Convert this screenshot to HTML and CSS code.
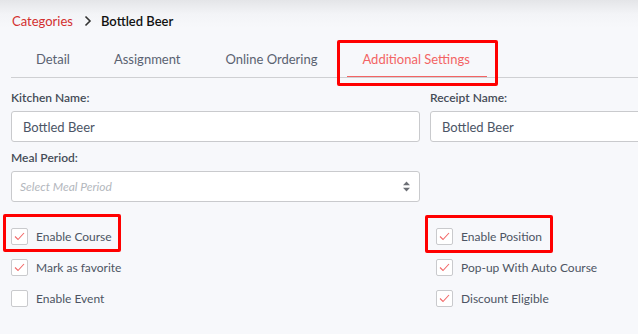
FILE: index.html
```html
<!DOCTYPE html>
<html>
<head>
<meta charset="utf-8">
<link rel="stylesheet" href="styles.css">
</head>
<body>
<div class="page">
  <div class="crumbs">
    <span class="crumb-link">Categories</span>
    <svg class="chev" width="8" height="12" viewBox="0 0 8 12"><polyline points="1.5,1.5 6,6 1.5,10.5" fill="none" stroke="#333" stroke-width="1.6"/></svg>
    <span class="crumb-current">Bottled Beer</span>
  </div>

  <div class="tabs">
    <div class="tab">Detail</div>
    <div class="tab">Assignment</div>
    <div class="tab">Online Ordering</div>
    <div class="tab active">Additional Settings<span class="mark mark-tab"></span></div>
  </div>

  <div class="fields">
    <div class="field">
      <label class="lbl">Kitchen Name:</label>
      <div class="input">Bottled Beer</div>
    </div>
    <div class="field">
      <label class="lbl">Receipt Name:</label>
      <div class="input">Bottled Beer</div>
    </div>
    <div class="field">
      <label class="lbl">Meal Period:</label>
      <div class="input select">
        <span class="placeholder">Select Meal Period</span>
        <svg class="sort" width="7" height="11" viewBox="0 0 7 11"><polygon points="3.5,0.5 7,4.2 0,4.2" fill="#6c6f75"/><polygon points="0,6.8 7,6.8 3.5,10.5" fill="#6c6f75"/></svg>
      </div>
    </div>
  </div>

  <div class="checks">
    <div class="col">
      <div class="chk marked"><span class="box on"></span><span>Enable Course</span><span class="mark mark-left"></span></div>
      <div class="chk"><span class="box on"></span><span>Mark as favorite</span></div>
      <div class="chk"><span class="box"></span><span>Enable Event</span></div>
    </div>
    <div class="col">
      <div class="chk marked"><span class="box on"></span><span>Enable Position</span><span class="mark mark-right"></span></div>
      <div class="chk"><span class="box on"></span><span>Pop-up With Auto Course</span></div>
      <div class="chk"><span class="box on"></span><span>Discount Eligible</span></div>
    </div>
  </div>
</div>
</body>
</html>
```

FILE: styles.css
```css
html, body {
  margin: 0;
  padding: 0;
}
body {
  width: 638px;
  height: 334px;
  overflow: hidden;
  background: linear-gradient(#e4e5e8 0px, #f3f4f7 14px, #f7f8fb 28px);
  font-family: Lato, "Open Sans", sans-serif;
  color: #4a5260;
}
.page {
  width: 860px;
  padding: 0 0 0 11px;
}
.crumbs {
  display: flex;
  align-items: center;
  height: 42px;
  padding-left: 1px;
  font-size: 13px;
}
.crumb-link {
  color: #d3302f;
}
.chev {
  margin: 0 9px 0 11px;
}
.crumb-current {
  color: #111;
  font-weight: 600;
}
.tabs {
  display: flex;
  height: 35px;
  border-bottom: 1px solid #cfd0d3;
  width: 627px;
}
.tab {
  position: relative;
  padding: 0 22px;
  font-size: 13px;
  line-height: 34px;
  color: #5a6271;
}
.tab:first-child {
  padding-left: 25px;
}
.tab:nth-child(3) {
  padding-left: 23px;
  padding-right: 23px;
}
.tab.active {
  color: #f36464;
}
.tab.active::after {
  content: "";
  position: absolute;
  left: 7px;
  right: 5px;
  bottom: 0;
  height: 1px;
  background: #f36464;
}
.mark {
  position: absolute;
  border: 3px solid #ff0000;
  border-radius: 2px;
  pointer-events: none;
}
.mark-tab {
  left: -3px;
  top: -2px;
  width: 155px;
  height: 40px;
}
.fields {
  display: grid;
  grid-template-columns: 409px 409px;
  column-gap: 10px;
  padding-top: 7px;
}
.field {
  display: flex;
  flex-direction: column;
}
.lbl {
  font-size: 12px;
  font-weight: 600;
  color: #454c57;
  line-height: 26px;
}
.input {
  height: 29px;
  border: 1px solid #c9cacd;
  border-radius: 3px;
  background: #fff;
  font-size: 13px;
  color: #4b5566;
  display: flex;
  align-items: center;
  padding-left: 11px;
  margin-bottom: 3px;
}
.select {
  padding-left: 8px;
  padding-right: 9px;
  justify-content: space-between;
}
.placeholder {
  font-style: italic;
  color: #b3b7bd;
  font-size: 12px;
}
.checks {
  display: grid;
  grid-template-columns: 425px 300px;
  padding-top: 23px;
}
.col {
  display: flex;
  flex-direction: column;
  gap: 14px;
}
.chk {
  position: relative;
  display: flex;
  align-items: center;
  gap: 8px;
  height: 17px;
  font-size: 12px;
  color: #4d5563;
}
.box {
  width: 15px;
  height: 15px;
  border: 1px solid #c9cacd;
  border-radius: 2px;
  background: #fff;
}
.box.on {
  background: #fff url("data:image/svg+xml;utf8,<svg xmlns='http://www.w3.org/2000/svg' width='15' height='15'><polyline points='3,7.5 6,10.5 12,4' fill='none' stroke='%23f26868' stroke-width='1.1'/></svg>") no-repeat center;
}
.mark-left {
  left: -8px;
  top: -14px;
  width: 112px;
  height: 32px;
}
.mark-right {
  left: -11px;
  top: -13px;
  width: 122px;
  height: 32px;
}
```
